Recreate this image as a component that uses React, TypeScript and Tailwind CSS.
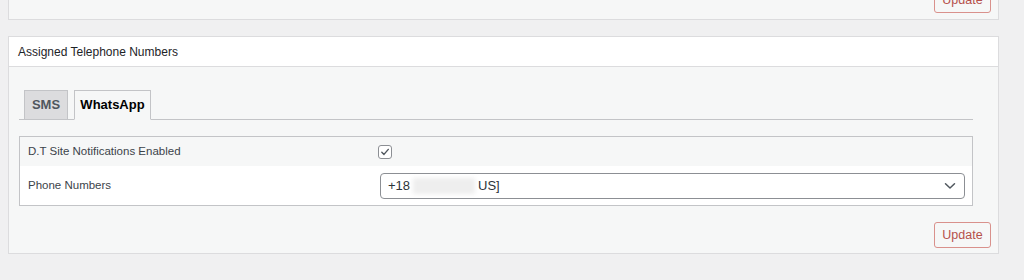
import React, { useState } from "react";

export default function App() {
  const [tab, setTab] = useState("whatsapp");
  const [enabled, setEnabled] = useState(true);

  return (
    <div className="h-[280px] w-[1024px] overflow-hidden bg-[#f0f0f1] pl-[8px] pr-[25px] font-['Liberation_Sans',Arial,sans-serif] text-[12px] text-[#1d2327]">
      {/* previous box, only its bottom shows */}
      <div className="-mt-[40px] flex h-[60px] items-end justify-end border border-[#dcdcde] bg-[#f6f7f7] pb-[6px] pr-[7px]">
        <button className="h-[25px] w-[57px] rounded-[3px] border border-[#d9918c] bg-[#f6f7f7] text-[12.5px] text-[#b5504b]">
          Update
        </button>
      </div>

      <div className="mt-[16px] border border-[#dcdcde] bg-[#f6f7f7]">
        <div className="flex h-[30px] items-center border-b border-[#dcdcde] bg-white px-[9px]">
          Assigned Telephone Numbers
        </div>

        <div className="pl-[10px] pr-[25px] pt-[23px]">
          <div className="flex gap-[6px] border-b border-[#c3c4c7] pl-[5px]">
            <button
              onClick={() => setTab("sms")}
              className={`-mb-px h-[30px] w-[44px] border border-[#c3c4c7] text-[13px] font-semibold ${
                tab === "sms" ? "border-b-[#f6f7f7] bg-[#f6f7f7] text-black" : "bg-[#dcdcde] text-[#50575e]"
              }`}
            >
              SMS
            </button>
            <button
              onClick={() => setTab("whatsapp")}
              className={`-mb-px h-[30px] w-[77px] border border-[#c3c4c7] text-[13px] font-semibold ${
                tab === "whatsapp" ? "border-b-[#f6f7f7] bg-[#f6f7f7] text-black" : "bg-[#dcdcde] text-[#50575e]"
              }`}
            >
              WhatsApp
            </button>
          </div>

          <div className="mt-[16px] border border-[#c3c4c7] text-[11.5px] text-[#3c434a]">
            <div className="flex h-[29px] items-center bg-[#f6f7f7]">
              <div className="w-[358px] pl-[8px]">D.T Site Notifications Enabled</div>
              <button
                onClick={() => setEnabled(!enabled)}
                className="flex h-[14px] w-[14px] items-center justify-center rounded-[3px] border border-[#8c8f94] bg-white"
              >
                {enabled && (
                  <svg width="10" height="10" viewBox="0 0 10 10" fill="none">
                    <path d="M1.8 5.2 L4 7.4 L8.3 2.4" stroke="#50575e" strokeWidth="1.4" strokeLinecap="round" strokeLinejoin="round" />
                  </svg>
                )}
              </button>
            </div>
            <div className="flex h-[39px] items-center bg-white">
              <div className="w-[360px] pl-[8px]">Phone Numbers</div>
              <div className="mr-[7px] flex h-[26px] flex-1 items-center justify-between rounded-[4px] border border-[#8c8f94] bg-white pl-[7px] pr-[8px] text-[13px] text-[#2c3338]">
                <div className="flex items-center">
                  <span>+18</span>
                  <span className="mx-[3px] inline-block h-[16px] w-[62px] bg-[#eeeeee] blur-[2px]" />
                  <span>US]</span>
                </div>
                <svg width="12" height="8" viewBox="0 0 12 8" fill="none">
                  <path d="M1.5 1.8 L6 6 L10.5 1.8" stroke="#50575e" strokeWidth="1.5" strokeLinecap="round" strokeLinejoin="round" />
                </svg>
              </div>
            </div>
          </div>
        </div>

        <div className="flex justify-end pb-[5px] pr-[7px] pt-[16px]">
          <button className="h-[26px] w-[57px] rounded-[3px] border border-[#d9918c] bg-[#f6f7f7] text-[12.5px] text-[#b5504b]">
            Update
          </button>
        </div>
      </div>
    </div>
  );
}
